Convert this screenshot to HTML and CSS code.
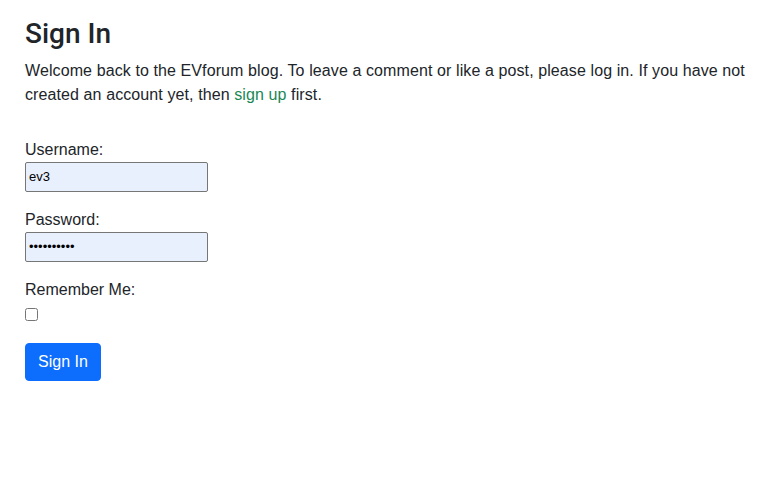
FILE: index.html
```html
<!DOCTYPE html>
<html lang="en">
<head>
<meta charset="utf-8">
<title>Sign In</title>
<link rel="stylesheet" href="styles.css">
</head>
<body>
<main class="page">
  <h2 class="title">Sign In</h2>
  <p class="intro">Welcome back to the EVforum blog. To leave a comment or like a post, please log in. If you have not created an account yet, then <a class="link" href="#">sign up</a> first.</p>
  <form class="form">
    <div class="field">
      <label class="label" for="u">Username:</label>
      <input class="input" id="u" type="text" value="ev3">
    </div>
    <div class="field">
      <label class="label" for="p">Password:</label>
      <input class="input" id="p" type="password" value="ev3passwrd">
    </div>
    <div class="field">
      <label class="label" for="r">Remember Me:</label>
      <input class="check" id="r" type="checkbox">
    </div>
    <button class="btn" type="button">Sign In</button>
  </form>
</main>
</body>
</html>
```
FILE: styles.css
```css
* { box-sizing: border-box; }
html, body { margin: 0; padding: 0; background: #fff; }
body {
  font-family: "Liberation Sans", Arial, sans-serif;
  font-size: 16px;
  line-height: 24px;
  color: #212529;
}
.page {
  padding: 17px 12px 0 25px;
}
.title {
  margin: 0 0 8px 0;
  font-family: Roboto, "Liberation Sans", Arial, sans-serif;
  font-size: 28px;
  line-height: 1.2;
  font-weight: 500;
}
.intro {
  margin: 0 0 31px 0;
  letter-spacing: 0.1px;
}
.link {
  color: #198754;
  text-decoration: none;
}
.form {
  display: flex;
  flex-direction: column;
  align-items: flex-start;
}
.field {
  display: flex;
  flex-direction: column;
  align-items: flex-start;
  margin-bottom: 16px;
}
.label {
  display: block;
  line-height: 24px;
}
.input {
  width: 183px;
  height: 30px;
  margin: 0;
  padding: 1px 3px;
  border: 1px solid #767676;
  border-radius: 2px;
  background: #e8f0fe;
  font-family: "Liberation Sans", Arial, sans-serif;
  font-size: 13px;
  color: #000;
}
.check {
  width: 13px;
  height: 13px;
  margin: 6px 0 6px 0;
}
.btn {
  margin-top: 0;
  padding: 6px 12px;
  border: 1px solid #0d6efd;
  border-radius: 4px;
  background: #0d6efd;
  color: #fff;
  font-family: "Liberation Sans", Arial, sans-serif;
  font-size: 16px;
  line-height: 24px;
}
```
